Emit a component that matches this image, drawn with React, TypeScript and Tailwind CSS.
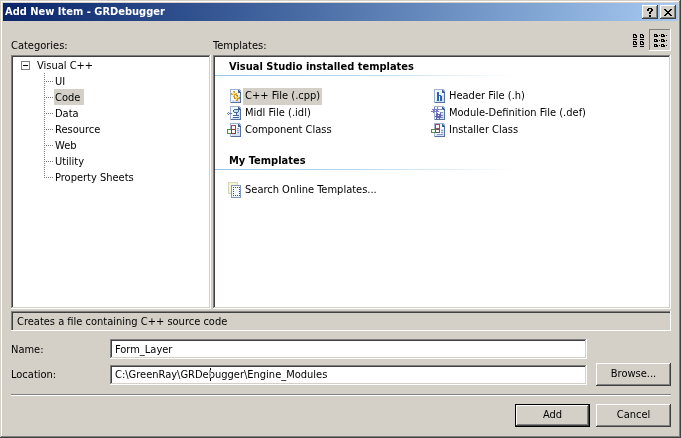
import React, { useState } from "react";

const SUNKEN =
  "shadow-[inset_-1px_-1px_#ffffff,inset_1px_1px_#808080,inset_-2px_-2px_#d4d0c8,inset_2px_2px_#404040]";
const RAISED =
  "shadow-[inset_-1px_-1px_#404040,inset_1px_1px_#ffffff,inset_-2px_-2px_#808080]";

function Page() {
  return (
    <>
      <path d="M3 1h9l2 2v12H3z" fill="#9fb2d2" />
      <path d="M4 2h7v3h2v9H4z" fill="#f4f8ff" />
      <path d="M10 7h3v7H5v-2h5z" fill="#d3e0f5" />
      <path d="M13 4h1v11H4v-1h9z" fill="#56719f" />
      <path d="M11 2h1v1h1v1h1v1h-3z" fill="#3f5b8f" />
    </>
  );
}

function Icon({ children }: { children: React.ReactNode }) {
  return (
    <svg viewBox="0 0 16 16" className="size-4 shrink-0" shapeRendering="crispEdges" aria-hidden="true">
      {children}
    </svg>
  );
}

function CppIcon() {
  return (
    <Icon>
      <Page />
      <path d="M6 3h2v2h2v2H8v2H6V7H4V5h2z" fill="#d8a428" />
      <path d="M9 7h2v2h2v2h-2v2H9v-2H7V9h2z" fill="#c89018" />
      <path d="M6 4h1v1h2v1H7v2H6V6H5V5h1zM9 8h1v1h2v1h-2v2H9v-2H8V9h1z" fill="#ffe070" />
    </Icon>
  );
}

function MidlIcon() {
  return (
    <Icon>
      <Page />
      <path d="M7 4h4v1H7zM6 5h1v2H6zM11 5h1v2h-1zM7 7h4v1H7zM6 10h6v1H6zM9 8h1v2H9zM6 12h6v1H6z" fill="#486a96" />
      <path d="M1 7h1v1H1zM1 9h1v1H1zM0 8h1v1H0zM2 8h3v1H2z" fill="#6482a8" />
      <path d="M7 5h4v2H7z" fill="#c4def4" />
    </Icon>
  );
}

function ComponentIcon() {
  return (
    <Icon>
      <Page />
      <path d="M10 6h2v1h-2zM10 8h2v1h-2zM10 10h2v1h-2z" fill="#8ca0c4" />
      <path d="M4 3h5v5H4z" fill="#a04858" />
      <path d="M5 4h3v3H5z" fill="#fff4f4" />
      <path d="M0 7h5v5H0z" fill="#5c8c4c" />
      <path d="M1 8h3v3H1z" fill="#f4fff0" />
      <path d="M4 7h5v5H4z" fill="#8c3448" />
      <path d="M5 8h3v3H5z" fill="#ffffff" />
    </Icon>
  );
}

function InstallerIcon() {
  return (
    <Icon>
      <Page />
      <path d="M10 8h2v1h-2zM10 10h2v1h-2zM6 12h6v1H6z" fill="#8ca0c4" />
      <path d="M4 2h5v5H4z" fill="#a04858" />
      <path d="M5 3h3v3H5z" fill="#fff4f4" />
      <path d="M0 7h5v4H0z" fill="#5c8c4c" />
      <path d="M1 8h3v2H1z" fill="#f4fff0" />
      <path d="M4 7h5v4H4z" fill="#5c5c6c" />
      <path d="M5 8h3v2H5z" fill="#ffffff" />
    </Icon>
  );
}

function HeaderIcon() {
  return (
    <Icon>
      <Page />
      <path d="M6 4h2v3h2v1h1v5H9V8H8v5H6z" fill="#2c64ac" />
    </Icon>
  );
}

function DefIcon() {
  return (
    <Icon>
      <Page />
      <path d="M8 4h4v1H8zM9 7h3v1H9zM10 10h2v1h-2zM10 12h2v1h-2z" fill="#7c94c0" />
      <path d="M3 2h1v2h2V2h1v2h1v1H7v1h1v1H6v2H5V7H3v1H2V7H0V6h2V5H1V4h2zM4 5v1h1V5z" fill="#7c7cc8" />
      <path d="M6 8h1v1h2V8h1v2h1v1h-1v2H9v1H8v-1H6v1H5v-2H4v-1h1V9h1zM7 10v1h1v-1z" fill="#6464b4" />
    </Icon>
  );
}

function SearchIcon() {
  return (
    <Icon>
      <path d="M1 0h10v12H1z" fill="#d4d6bc" />
      <path d="M2 1h8v10H2z" fill="#f6f4d4" />
      <path d="M4 3h10v13H4z" fill="#8498be" />
      <path d="M5 4h8v11H5z" fill="#f2f6ff" />
      <path d="M6 5h1v1H6zM8 5h1v1H8zM10 5h1v1h-1zM12 5h1v1h-1zM6 7h1v1H6zM12 7h1v1h-1zM6 9h1v1H6zM12 9h1v1h-1zM6 11h1v1H6zM12 11h1v1h-1zM6 13h1v1H6zM8 13h1v1H8zM10 13h1v1h-1zM12 13h1v1h-1z" fill="#3c5084" />
    </Icon>
  );
}

function LargeIconsGlyph() {
  return (
    <svg viewBox="0 0 11 13" className="h-[13px] w-[11px]" shapeRendering="crispEdges" aria-hidden="true">
      {[0, 7].map((x) =>
        [0, 7].map((y) => (
          <g key={`${x}-${y}`} transform={`translate(${x} ${y})`}>
            <path d="M0 0h3v1h1v3H0zM0 5h4v1H0z" fill="#000" />
            <path d="M1 1h1v2H1zM2 2h1v1H2z" fill="#d4d0c8" />
          </g>
        )),
      )}
    </svg>
  );
}

function SmallIconsGlyph() {
  return (
    <svg viewBox="0 0 13 13" className="size-[13px]" shapeRendering="crispEdges" aria-hidden="true">
      {[0, 7].map((x) =>
        [0, 5, 10].map((y) => (
          <g key={`${x}-${y}`} transform={`translate(${x} ${y})`}>
            <path d="M0 0h3v1h1v2H0zM5 1h1v1H5z" fill="#000" />
            <path d="M1 1h1v1H1z" fill="#d4d0c8" />
          </g>
        )),
      )}
    </svg>
  );
}

const categories = ["UI", "Code", "Data", "Resource", "Web", "Utility", "Property Sheets"];

const templates = [
  { name: "C++ File (.cpp)", icon: <CppIcon /> },
  { name: "Header File (.h)", icon: <HeaderIcon /> },
  { name: "Midl File (.idl)", icon: <MidlIcon /> },
  { name: "Module-Definition File (.def)", icon: <DefIcon /> },
  { name: "Component Class", icon: <ComponentIcon /> },
  { name: "Installer Class", icon: <InstallerIcon /> },
];

function TemplateItem({
  name,
  icon,
  selected,
  onSelect,
}: {
  name: string;
  icon: React.ReactNode;
  selected?: boolean;
  onSelect?: () => void;
}) {
  return (
    <button type="button" onClick={onSelect} aria-pressed={!!selected} className="flex h-[17px] text-left">
      {icon}
      <span className={`h-full px-0.5 leading-4 whitespace-nowrap ${selected ? "bg-[#d4d0c8]" : ""}`}>{name}</span>
    </button>
  );
}

function SectionHeading({ children }: { children: React.ReactNode }) {
  return (
    <>
      <h2 className="pt-0.5 pl-3.5 text-[11px] leading-4 font-bold">{children}</h2>
      <div className="h-px w-[300px] bg-linear-to-r from-[#94c4e8] via-[#bcdaf0] to-white" />
    </>
  );
}

function DialogButton({ children, isDefault }: { children: React.ReactNode; isDefault?: boolean }) {
  return (
    <button
      type="button"
      className={`h-[23px] w-[75px] shrink-0 bg-[#d4d0c8] ${RAISED} ${isDefault ? "border border-black" : ""}`}
    >
      {children}
    </button>
  );
}

export default function App() {
  const [category, setCategory] = useState("Code");
  const [template, setTemplate] = useState("C++ File (.cpp)");
  const [name, setName] = useState("Form_Layer");
  const [location, setLocation] = useState("C:\\GreenRay\\GRDebugger\\Engine_Modules");

  return (
    <div
      role="dialog"
      aria-labelledby="title"
      className="flex min-h-screen flex-col bg-[#d4d0c8] p-[3px] font-['DejaVu_Sans_Condensed','DejaVu_Sans',sans-serif] text-[11px] text-black shadow-[inset_-1px_-1px_#404040,inset_1px_1px_#d4d0c8,inset_-2px_-2px_#808080,inset_2px_2px_#ffffff]"
    >
      <header className="flex h-[18px] items-center bg-linear-to-r from-[#0a246a] to-[#a6caf0] px-0.5">
        <h1 id="title" className="flex-1 text-[11px] leading-[18px] font-bold text-white">
          Add New Item - GRDebugger
        </h1>
        <div className="flex gap-0.5">
          <button type="button" aria-label="Help" className={`flex h-3.5 w-4 items-center justify-center bg-[#d4d0c8] ${RAISED}`}>
            <svg viewBox="0 0 6 9" className="h-[9px] w-1.5" shapeRendering="crispEdges" aria-hidden="true">
              <path d="M1 0h4v1h1v2H5v1H4v2H2V4h1V3h1V1H2v2H0V1h1zM2 7h2v2H2z" />
            </svg>
          </button>
          <button type="button" aria-label="Close" className={`flex h-3.5 w-4 items-center justify-center bg-[#d4d0c8] ${RAISED}`}>
            <svg viewBox="0 0 8 7" className="h-[7px] w-2" shapeRendering="crispEdges" aria-hidden="true">
              <path d="M0 0h2v1h1v1h2V1h1V0h2v1H7v1H6v1H5v1h1v1h1v1h1v1H6V6H5V5H3v1H2v1H0V6h1V5h1V4h1V3H2V2H1V1H0z" />
            </svg>
          </button>
        </div>
      </header>

      <main className="flex flex-1 flex-col pt-2 pr-[7px] pl-2">
        <div className="flex items-end">
          <h2 id="categories" className="w-[202px] leading-2.5">Categories:</h2>
          <h2 id="templates" className="flex-1 leading-2.5">Templates:</h2>
          <button type="button" aria-label="Large icons" className="flex size-[22px] items-center justify-center">
            <LargeIconsGlyph />
          </button>
          <button
            type="button"
            aria-label="Small icons"
            aria-pressed="true"
            className="flex size-[22px] items-center justify-center shadow-[inset_-1px_-1px_#ffffff,inset_1px_1px_#808080]"
          >
            <SmallIconsGlyph />
          </button>
        </div>

        <div className="mt-1 flex flex-1 gap-0.5">
          <section aria-labelledby="categories" className={`w-[200px] shrink-0 bg-white p-0.5 ${SUNKEN}`}>
            <div className="flex h-4 items-start gap-[7px] pl-2">
              <svg viewBox="0 0 9 9" className="size-[9px] self-center" shapeRendering="crispEdges" aria-hidden="true">
                <path d="M0 0h9v9H0z" fill="#808080" />
                <path d="M1 1h7v7H1z" fill="#fff" />
                <path d="M2 4h5v1H2z" />
              </svg>
              <span className="leading-[18px]">Visual C++</span>
            </div>
            <ul className="pl-[31px]">
              {categories.map((item, i) => (
                <li key={item} className="flex h-4">
                  <svg viewBox="0 0 10 16" className="h-4 w-2.5" shapeRendering="crispEdges" aria-hidden="true">
                    <path
                      d={i === categories.length - 1 ? "M.5 0v9" : "M.5 0v16"}
                      stroke="#808080"
                      strokeDasharray="1 1"
                    />
                    <path d="M2 8.500h7" stroke="#808080" strokeDasharray="1 1" />
                  </svg>
                  <button
                    type="button"
                    onClick={() => setCategory(item)}
                    className={`h-4 pr-1 pl-px leading-[18px] ${category === item ? "bg-[#d4d0c8]" : ""}`}
                  >
                    {item}
                  </button>
                </li>
              ))}
            </ul>
          </section>

          <section aria-labelledby="templates" className={`flex-1 bg-white p-0.5 ${SUNKEN}`}>
            <SectionHeading>Visual Studio installed templates</SectionHeading>
            <div className="grid grid-cols-[204px_204px] py-3 pl-3">
              {templates.map((t) => (
                <TemplateItem
                  key={t.name}
                  name={t.name}
                  icon={t.icon}
                  selected={template === t.name}
                  onSelect={() => setTemplate(t.name)}
                />
              ))}
            </div>
            <SectionHeading>My Templates</SectionHeading>
            <div className="py-3 pl-3">
              <TemplateItem name="Search Online Templates..." icon={<SearchIcon />} />
            </div>
          </section>
        </div>

        <p className="mt-0.5 h-5 pl-1.5 leading-[22px] shadow-[inset_-1px_-1px_#ffffff,inset_1px_1px_#808080,inset_2px_2px_#404040]">
          Creates a file containing C++ source code
        </p>

        <div className="mt-2 grid grid-cols-[99px_1fr_75px] items-center pb-1">
          <label htmlFor="name" className="pt-0.5">Name:</label>
          <input
            id="name"
            value={name}
            onChange={(e) => setName(e.target.value)}
            className={`mr-[9px] h-5 min-w-0 bg-white px-[5px] outline-none ${SUNKEN}`}
          />
          <span />
          <label htmlFor="location" className="pt-0.5">Location:</label>
          <div className="relative mr-[9px] flex">
            <input
              id="location"
              value={location}
              onChange={(e) => setLocation(e.target.value)}
              className={`h-5 min-w-0 flex-1 bg-white px-[5px] outline-none ${SUNKEN}`}
            />
            <span className="absolute top-[3px] left-[100px] h-[13px] w-px bg-white mix-blend-difference" />
          </div>
          <div className="py-1">
            <DialogButton>Browse...</DialogButton>
          </div>
        </div>

        <hr className="h-0.5 border-t border-b border-t-[#808080] border-b-white" />

        <div className="flex justify-end gap-1.5 py-2">
          <DialogButton isDefault>Add</DialogButton>
          <DialogButton>Cancel</DialogButton>
        </div>
      </main>
    </div>
  );
}
